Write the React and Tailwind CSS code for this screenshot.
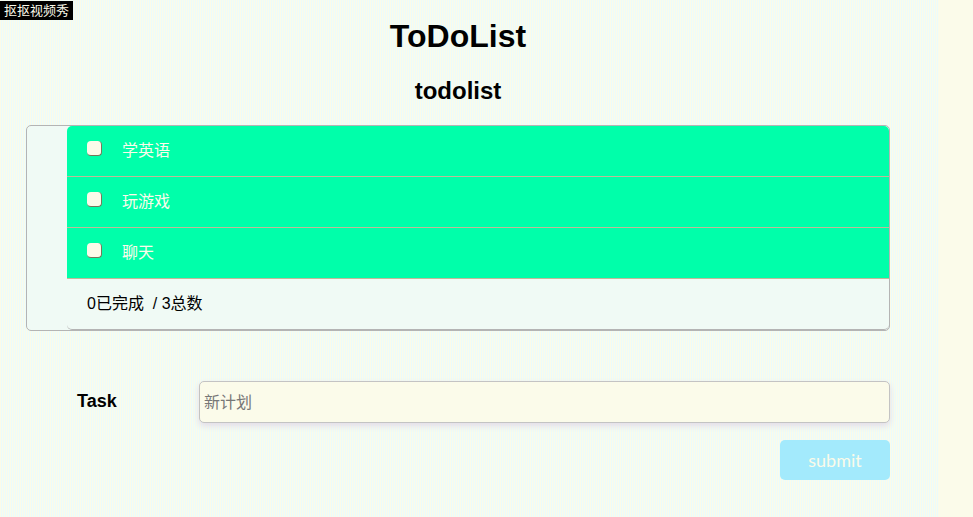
import React, { useState } from "react";

const initialTasks = ["学英语", "玩游戏", "聊天"];

function TaskRow({ name, done, onToggle }) {
  return (
    <li className="h-[51px] border-b border-[#c3b998] bg-[#00ffaa] px-5 text-[#fbfbea] first:rounded-t-[5px]">
      <label className="flex h-full items-start gap-5">
        <input
          type="checkbox"
          checked={done}
          onChange={onToggle}
          className="mt-[15px] size-[15px] appearance-none rounded-[4px] border-r border-b border-[#77775a] bg-[#fbfbea] checked:bg-[#2f80ed]"
        />
        <span className="leading-[50px]">{name}</span>
      </label>
    </li>
  );
}

export default function App() {
  const [tasks, setTasks] = useState(initialTasks.map((name) => ({ name, done: false })));
  const [draft, setDraft] = useState("");

  const toggle = (index) =>
    setTasks(tasks.map((task, i) => (i === index ? { ...task, done: !task.done } : task)));

  const addTask = (event) => {
    event.preventDefault();
    if (!draft.trim()) return;
    setTasks([...tasks, { name: draft.trim(), done: false }]);
    setDraft("");
  };

  return (
    <div className="flex min-h-screen bg-[#fbfbea] pr-[35px] font-['Liberation_Sans','Noto_Sans_CJK_SC',sans-serif] text-base text-black">
      <div className="absolute top-px left-0 h-[19px] bg-black px-1 text-[13px] leading-[19px] text-[#fbfbea]">
        抠抠视频秀
      </div>
      <div className="flex-1 bg-[repeating-linear-gradient(90deg,#fbfbea_0px,#fbfbea_1px,#ebfbfb_1px,#ebfbfb_2px)] pr-12 pl-[26px]">
        <main>
          <h1 className="pt-4 text-center text-[32px] leading-10 font-bold">ToDoList</h1>
          <h2 className="pt-5 text-center text-2xl leading-[30px] font-bold">todolist</h2>

          <section className="mt-[19px] rounded-[5px] border border-[#b4b4b4] bg-[#f0faf5] pl-10">
            <ul>
              {tasks.map((task, index) => (
                <TaskRow key={index} name={task.name} done={task.done} onToggle={() => toggle(index)} />
              ))}
            </ul>
            <p className="h-[51px] rounded-[5px] border-b border-[#b4b4b4] px-5 leading-[50px] whitespace-pre">
              {tasks.filter((task) => task.done).length}已完成{"  "}/ {tasks.length}总数
            </p>
          </section>

          <form onSubmit={addTask} className="pt-[50px] pl-[51px]">
            <div className="flex">
              <label htmlFor="task" className="w-[122px] text-lg leading-10 font-bold">
                Task
              </label>
              <input
                id="task"
                type="text"
                value={draft}
                onChange={(event) => setDraft(event.target.value)}
                placeholder="新计划"
                className="h-[42px] min-w-0 flex-1 rounded-[5px] border border-[#c3c3c3] bg-[#fbfbea] px-1 pt-0.5 text-base shadow-[0_3px_6px_#e3dce8] outline-none placeholder:text-[#777777]"
              />
            </div>
            <div className="mt-[17px] flex justify-end">
              <button
                type="submit"
                className="h-10 w-[110px] rounded-[5px] bg-[#a3eafc] font-[Lato,sans-serif] text-lg text-[#fbfbea]"
              >
                submit
              </button>
            </div>
          </form>
        </main>
      </div>
    </div>
  );
}
